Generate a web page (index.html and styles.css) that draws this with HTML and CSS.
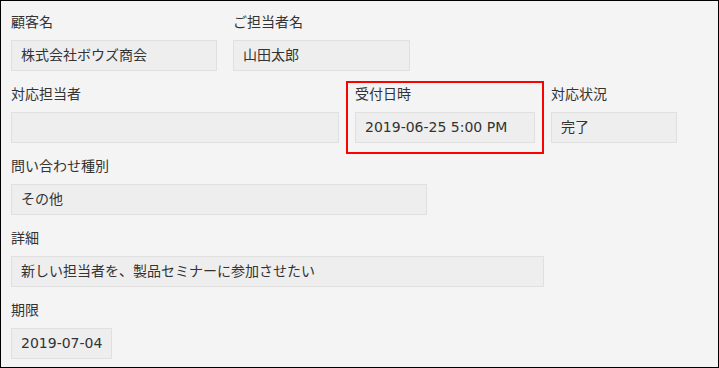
FILE: index.html
```html
<!DOCTYPE html>
<html>
<head>
    <meta name="viewport" content="width=device-width, initial-scale=1.0">
    <link rel="stylesheet" href="styles.css">
</head>
<body>
    <div class="record">
        <div class="row">
            <div class="field">
                <div class="label">顧客名</div>
                <div class="value w-206">株式会社ボウズ商会</div>
            </div>
            <div class="field">
                <div class="label">ご担当者名</div>
                <div class="value w-177">山田太郎</div>
            </div>
        </div>

        <div class="row">
            <div class="field">
                <div class="label">対応担当者</div>
                <div class="value w-328"></div>
            </div>
            <div class="field highlight">
                <div class="label">受付日時</div>
                <div class="value w-180">2019-06-25 5:00 PM</div>
            </div>
            <div class="field">
                <div class="label">対応状況</div>
                <div class="value w-126">完了</div>
            </div>
        </div>

        <div class="row">
            <div class="field">
                <div class="label">問い合わせ種別</div>
                <div class="value w-416">その他</div>
            </div>
        </div>

        <div class="row">
            <div class="field">
                <div class="label">詳細</div>
                <div class="value w-533">新しい担当者を、製品セミナーに参加させたい</div>
            </div>
        </div>

        <div class="row">
            <div class="field">
                <div class="label">期限</div>
                <div class="value w-101">2019-07-04</div>
            </div>
        </div>
    </div>
</body>
</html>
```

FILE: styles.css
```css
* {
    box-sizing: border-box;
}

body {
    margin: 0;
    font-family: "DejaVu Sans", "Noto Sans CJK JP", sans-serif;
    font-size: 14px;
    color: #333;
}

.record {
    width: 719px;
    height: 368px;
    border: 1px solid #000;
    background: #f4f4f4;
    padding: 11px 0 0 10px;
    overflow: hidden;
}

.row {
    display: flex;
    gap: 16px;
    height: 72px;
    align-items: flex-start;
}

.label {
    height: 20px;
    line-height: 20px;
    margin-bottom: 8px;
    white-space: nowrap;
}

.value {
    height: 31px;
    line-height: 29px;
    padding: 0 9px;
    background: #eeeeee;
    border: 1px solid #e0e0e0;
    white-space: nowrap;
}

.highlight {
    position: relative;
}

.highlight::after {
    content: "";
    position: absolute;
    top: -3px;
    left: -9px;
    right: -9px;
    bottom: -11px;
    border: 2px solid #ff0000;
}

.w-206 { width: 206px; }
.w-177 { width: 177px; }
.w-328 { width: 328px; }
.w-180 { width: 180px; }
.w-126 { width: 126px; }
.w-416 { width: 416px; }
.w-533 { width: 533px; }
.w-101 { width: 101px; }
```
